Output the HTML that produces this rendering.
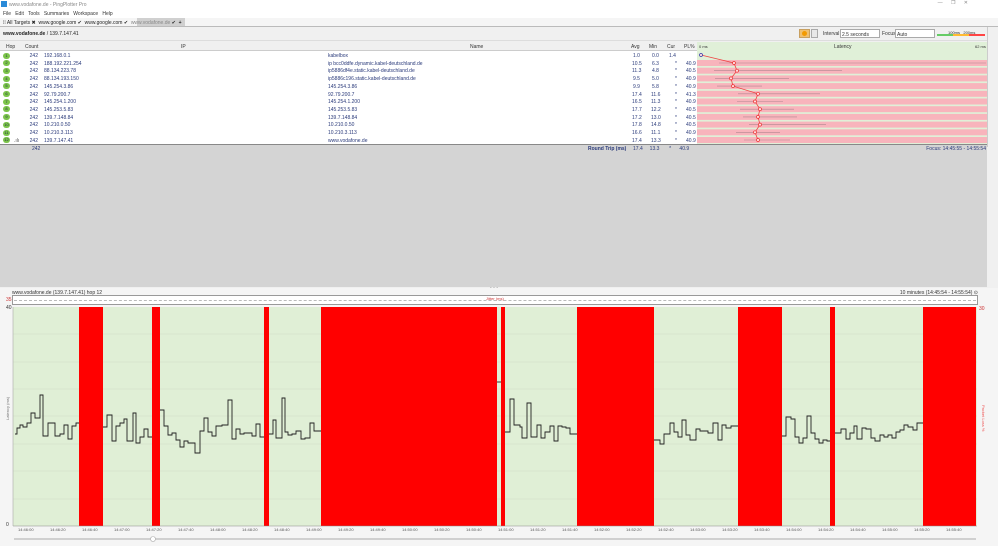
<!DOCTYPE html>
<html><head><meta charset="utf-8"><style>
*{margin:0;padding:0;box-sizing:border-box}
body{width:998px;height:546px;overflow:hidden;background:#f0f0f0;font-family:"Liberation Sans",sans-serif;font-size:5px;color:#333;position:relative}
.a{position:absolute;white-space:nowrap}
.row{position:absolute;left:0;width:697px;height:7.7px;font-size:5px;color:#2a3a7a}
.row span{position:absolute;top:1px}
.hop{position:absolute;left:3px;top:0.5px;width:7px;height:6px;border-radius:3px;background:#7cc44a;color:#234;font-size:4px;text-align:center;line-height:6px}
.num{text-align:right;width:16px}
</style></head><body>
<div class="a" style="left:0;top:0;width:998px;height:9px;background:#fff"></div>
<div class="a" style="left:1px;top:1px;width:6px;height:6px;background:#2a8ad8"></div>
<div class="a" style="left:9px;top:1.5px;color:#888">www.vodafone.de - PingPlotter Pro</div>
<div class="a" style="right:30px;top:0;color:#888">—&nbsp;&nbsp;&nbsp;&nbsp;&nbsp;&nbsp;❐&nbsp;&nbsp;&nbsp;&nbsp;&nbsp;&nbsp;✕</div>
<div class="a" style="left:0;top:9px;width:998px;height:9px;background:#fff"></div>
<div class="a" style="left:3px;top:11px;color:#333">File&nbsp;&nbsp;&nbsp;Edit&nbsp;&nbsp;&nbsp;Tools&nbsp;&nbsp;&nbsp;Summaries&nbsp;&nbsp;&nbsp;Workspace&nbsp;&nbsp;&nbsp;Help</div>
<div class="a" style="left:0;top:18px;width:998px;height:9px;background:#f5f5f5"></div>
<div class="a" style="left:137px;top:18px;width:48px;height:8px;background:#d0d0d0"></div>
<div class="a" style="left:3px;top:19.5px;color:#222">⁞⁞ All Targets ✖ &nbsp;www.google.com ✔ &nbsp;www.google.com ✔ &nbsp;<span style="color:#888">www.vodafone.de</span> ✔ &nbsp;<b>+</b></div>
<div class="a" style="left:0;top:26px;width:998px;height:1px;background:#bbb"></div>
<div class="a" style="left:0;top:28px;width:987px;height:13px;background:#f0f0f0;border-bottom:1px solid #ddd"></div>
<div class="a" style="left:3px;top:31px;color:#222"><b>www.vodafone.de</b> / 139.7.147.41</div>
<div class="a" style="left:799px;top:29px;width:11px;height:9px;background:#f0c070;border:1px solid #c8a060"></div>
<div class="a" style="left:802px;top:31px;width:5px;height:5px;border-radius:3px;background:#f39a00"></div>
<div class="a" style="left:811px;top:29px;width:7px;height:9px;background:#e8e8e8;border:1px solid #aaa"></div>
<div class="a" style="left:823px;top:31px">Interval</div>
<div class="a" style="left:840px;top:29px;width:40px;height:9px;background:#fff;border:1px solid #aaa;padding:2px 1px">2.5 seconds</div>
<div class="a" style="left:882px;top:31px">Focus</div>
<div class="a" style="left:895px;top:29px;width:40px;height:9px;background:#fff;border:1px solid #aaa;padding:2px 1px">Auto</div>
<div class="a" style="left:937px;top:34px;width:16px;height:2px;background:#6c6"></div>
<div class="a" style="left:953px;top:34px;width:16px;height:2px;background:#fb3"></div>
<div class="a" style="left:969px;top:34px;width:16px;height:2px;background:#f44"></div>
<div class="a" style="left:948px;top:30px;font-size:4px">100ms&nbsp;&nbsp;&nbsp;200ms</div>
<div class="a" style="left:987px;top:27px;width:11px;height:120px;background:#f0f0f0;border-left:1px solid #ccc"></div>
<div class="a" style="left:0;top:42px;width:987px;height:9px;background:#f0f0f0;border-bottom:1px solid #ccc"></div>
<div class="a" style="left:6px;top:44px">Hop</div>
<div class="a" style="left:25px;top:44px">Count</div>
<div class="a" style="left:181px;top:44px">IP</div>
<div class="a" style="left:470px;top:44px">Name</div>
<div class="a" style="left:631px;top:44px">Avg</div>
<div class="a" style="left:649px;top:44px">Min</div>
<div class="a" style="left:667px;top:44px">Cur</div>
<div class="a" style="left:684px;top:44px">PL%</div>
<div class="a" style="left:697px;top:42px;width:290px;height:9px;background:#e0f0d8"></div>
<div class="a" style="left:699px;top:44px;font-size:4px">0 ms</div>
<div class="a" style="left:834px;top:44px">Latency</div>
<div class="a" style="left:975px;top:44px;font-size:4px">62 ms</div>
<div class="a" style="left:0;top:51px;width:697px;height:93px;background:#fff"></div>
<div class="a" style="left:697px;top:51px;width:290px;height:93px;background:#e0f0d8"></div>
<svg class="a" style="left:0;top:0" width="998" height="546">
<g fill="#f8b4bc">
<rect x="697" y="60" width="290" height="6"/><rect x="697" y="67.7" width="290" height="6"/><rect x="697" y="75.4" width="290" height="6"/><rect x="697" y="83.1" width="290" height="6"/><rect x="697" y="90.8" width="290" height="6"/><rect x="697" y="98.5" width="290" height="6"/><rect x="697" y="106.2" width="290" height="6"/><rect x="697" y="113.9" width="290" height="6"/><rect x="697" y="121.6" width="290" height="6"/><rect x="697" y="129.3" width="290" height="6"/><rect x="697" y="137" width="290" height="6"/>
</g>
<g stroke="#b08890" stroke-width="0.6">
<line x1="719" y1="63" x2="986" y2="63"/><line x1="714" y1="70.7" x2="842" y2="70.7"/><line x1="715" y1="78.4" x2="789" y2="78.4"/><line x1="717" y1="86.1" x2="762" y2="86.1"/><line x1="738" y1="93.8" x2="820" y2="93.8"/><line x1="737" y1="101.5" x2="783" y2="101.5"/><line x1="740" y1="109.2" x2="794" y2="109.2"/><line x1="743" y1="116.9" x2="797" y2="116.9"/><line x1="749" y1="124.6" x2="826" y2="124.6"/><line x1="736" y1="132.3" x2="780" y2="132.3"/><line x1="744" y1="140" x2="790" y2="140"/>
</g>
<polyline fill="none" stroke="#e44" stroke-width="0.8" points="701,55 734,63 737,70.7 731,78.4 733,86.1 758,93.8 755,101.5 760,109.2 758,116.9 760,124.6 755,132.3 758,140"/>
<g fill="#fdd" stroke="#e33" stroke-width="0.7"><circle cx="734" cy="63" r="1.5"/><circle cx="737" cy="70.7" r="1.5"/><circle cx="731" cy="78.4" r="1.5"/><circle cx="733" cy="86.1" r="1.5"/><circle cx="758" cy="93.8" r="1.5"/><circle cx="755" cy="101.5" r="1.5"/><circle cx="760" cy="109.2" r="1.5"/><circle cx="758" cy="116.9" r="1.5"/><circle cx="760" cy="124.6" r="1.5"/><circle cx="755" cy="132.3" r="1.5"/><circle cx="758" cy="140" r="1.5"/><circle cx="701" cy="55" r="1.5" stroke="#33a"/></g>
</svg>
<div class="a" style="left:0;top:144px;width:987px;height:1px;background:#888"></div>
<div class="a" style="left:0;top:145px;width:987px;height:142px;background:#d4d4d4"></div>
<div class="a" style="left:32px;top:146px;color:#2a3a7a">242</div>
<div class="a" style="left:588px;top:146px;color:#2a3a7a"><b>Round Trip (ms)</b></div>
<div class="a" style="left:633px;top:146px;color:#2a3a7a">17.4&nbsp;&nbsp;&nbsp;&nbsp;&nbsp;13.3&nbsp;&nbsp;&nbsp;&nbsp;&nbsp;&nbsp;&nbsp;*&nbsp;&nbsp;&nbsp;&nbsp;&nbsp;&nbsp;40.9</div>
<div class="a" style="right:12px;top:146px;color:#2a3a7a">Focus: 14:45:55 - 14:55:54</div>
<div class="a" style="left:490px;top:286px;color:#555">• • •</div>
<div class="a" style="left:0;top:288px;width:998px;height:258px;background:#f5f5f5"></div>
<div class="a" style="left:12px;top:290px;color:#333">www.vodafone.de (139.7.147.41) hop 12</div>
<div class="a" style="right:20px;top:290px;color:#333">10 minutes (14:45:54 - 14:55:54) ⊙</div>
<div class="a" style="left:12px;top:295px;width:966px;height:10px;background:#fff;border:1px solid #999"></div>
<div class="a" style="left:6px;top:297px;color:#c33">35</div>
<div class="a" style="left:486px;top:296px;font-size:4px;color:#c33">Jitter (ms)</div>
<div class="a" style="left:14px;top:300px;width:962px;border-top:1px dashed #bbb"></div>
<div class="a" style="left:6px;top:305px;color:#333">40</div>
<div class="a" style="left:6px;top:522px;color:#333">0</div>
<div class="a" style="left:979px;top:306px;color:#c33">30</div>
<svg class="a" style="left:0;top:0" width="998" height="546">
<rect x="13" y="307" width="964" height="219" fill="#e0efd6"/>
<g stroke="#cfdcc5" stroke-width="0.6"><line x1="13" y1="334" x2="977" y2="334"/><line x1="13" y1="362" x2="977" y2="362"/><line x1="13" y1="389" x2="977" y2="389"/><line x1="13" y1="416" x2="977" y2="416"/><line x1="13" y1="444" x2="977" y2="444"/><line x1="13" y1="471" x2="977" y2="471"/><line x1="13" y1="499" x2="977" y2="499"/></g>
<g fill="#ff0000"><rect x="79" y="307" width="24" height="219"/><rect x="152" y="307" width="8" height="219"/><rect x="264" y="307" width="5" height="219"/><rect x="321" y="307" width="176" height="219"/><rect x="501" y="307" width="4" height="219"/><rect x="577" y="307" width="77" height="219"/><rect x="738" y="307" width="44" height="219"/><rect x="830" y="307" width="5" height="219"/><rect x="923" y="307" width="53" height="219"/></g>
<g fill="none" stroke="#222" stroke-width="0.9">
<path d="M15,434H17V428H20V425H23V427H27V423H31V413H35V418H40V395H43V436H48V423H55V436H60V434H64V425H68V439H72V426H76V423H79"/>
<path d="M103,427H107V415H112V441H116V426H120V423H124V419H127V441H133V413H136V443H140V437H144V429H148V437H152"/>
<path d="M160,410H164V426H168V435H172V433H176V440H180V447H184V441H188V443H195V453H200V431H204V418H208V432H212V436H216V426H222V425H228V400H232V439H236V429H240V434H244V433H252V436H256V424H260V437H264"/>
<path d="M269,434H273V420H276V438H282V398H285V432H288V435H292V434H296V431H301V439H305V438H310V423H314V431H321"/>
<path d="M497,382H501"/>
<path d="M505,432H510V399H514V425H520V427H522V438H527V403H531V437H537V425H541V438H545V432H550V426H554V441H558V426H562V427H566V428H570V434H577"/>
<path d="M654,440H660V444H664V434H670V423H674V432H678V437H682V420H686V435H690V440H696V429H700V431H708V433H713V423H718V440H722V425H726V428H731V426H738"/>
<path d="M782,436H786V417H791V419H795V437H799V443H803V438H807V416H811V433H815V439H819V443H823V440H827V441H830"/>
<path d="M835,433H841V429H846V439H850V433H854V426H857V439H862V428H866V429H871V438H875V441H880V435H884V437H888V435H892V438H896V432H900V430H904V425H908V427H913V430H917V423H923"/>
</g>
<line x1="13" y1="526" x2="977" y2="526" stroke="#888" stroke-width="0.6"/>
<line x1="13" y1="307" x2="13" y2="526" stroke="#aaa" stroke-width="0.6"/>
<line x1="14" y1="539" x2="976" y2="539" stroke="#bbb" stroke-width="1.2"/>
<circle cx="153" cy="539" r="2.5" fill="#fff" stroke="#aaa" stroke-width="0.6"/>
<text x="9" y="420" font-size="4" fill="#777" transform="rotate(-90 9 420)" font-family="Liberation Sans">Latency (ms)</text>
<text x="982" y="405" font-size="4" fill="#e55" transform="rotate(90 982 405)" font-family="Liberation Sans">Packet Loss %</text>
<g font-size="4" fill="#555" font-family="Liberation Sans">
<text x="18" y="531">14:46:00</text><text x="50" y="531">14:46:20</text><text x="82" y="531">14:46:40</text><text x="114" y="531">14:47:00</text><text x="146" y="531">14:47:20</text><text x="178" y="531">14:47:40</text><text x="210" y="531">14:48:00</text><text x="242" y="531">14:48:20</text><text x="274" y="531">14:48:40</text><text x="306" y="531">14:49:00</text><text x="338" y="531">14:49:20</text><text x="370" y="531">14:49:40</text><text x="402" y="531">14:50:00</text><text x="434" y="531">14:50:20</text><text x="466" y="531">14:50:40</text><text x="498" y="531">14:51:00</text><text x="530" y="531">14:51:20</text><text x="562" y="531">14:51:40</text><text x="594" y="531">14:52:00</text><text x="626" y="531">14:52:20</text><text x="658" y="531">14:52:40</text><text x="690" y="531">14:53:00</text><text x="722" y="531">14:53:20</text><text x="754" y="531">14:53:40</text><text x="786" y="531">14:54:00</text><text x="818" y="531">14:54:20</text><text x="850" y="531">14:54:40</text><text x="882" y="531">14:55:00</text><text x="914" y="531">14:55:20</text><text x="946" y="531">14:55:40</text>
</g>
</svg>
<div class="row" style="top:52px"><div class="hop">1</div><span class="num" style="left:22px">242</span><span style="left:44px">192.168.0.1</span><span style="left:328px">kabelbox</span><span style="left:633px">1.0</span><span style="left:652px">0.0</span><span style="left:669px">1.4</span></div>
<div class="row" style="top:59.7px"><div class="hop">2</div><span class="num" style="left:22px">242</span><span style="left:44px">188.192.221.254</span><span style="left:328px">ip bcc0ddfe.dynamic.kabel-deutschland.de</span><span style="left:632px">10.5</span><span style="left:652px">6.3</span><span style="left:675px">*</span><span style="left:686px">40.9</span></div>
<div class="row" style="top:67.4px"><div class="hop">3</div><span class="num" style="left:22px">242</span><span style="left:44px">88.134.223.78</span><span style="left:328px">ip5886df4e.static.kabel-deutschland.de</span><span style="left:632px">11.3</span><span style="left:652px">4.8</span><span style="left:675px">*</span><span style="left:686px">40.5</span></div>
<div class="row" style="top:75.1px"><div class="hop">4</div><span class="num" style="left:22px">242</span><span style="left:44px">88.134.193.150</span><span style="left:328px">ip5886c196.static.kabel-deutschland.de</span><span style="left:633px">9.5</span><span style="left:652px">5.0</span><span style="left:675px">*</span><span style="left:686px">40.9</span></div>
<div class="row" style="top:82.8px"><div class="hop">5</div><span class="num" style="left:22px">242</span><span style="left:44px">145.254.3.86</span><span style="left:328px">145.254.3.86</span><span style="left:633px">9.9</span><span style="left:652px">5.8</span><span style="left:675px">*</span><span style="left:686px">40.9</span></div>
<div class="row" style="top:90.5px"><div class="hop">6</div><span class="num" style="left:22px">242</span><span style="left:44px">92.79.200.7</span><span style="left:328px">92.79.200.7</span><span style="left:632px">17.4</span><span style="left:651px">11.6</span><span style="left:675px">*</span><span style="left:686px">41.3</span></div>
<div class="row" style="top:98.2px"><div class="hop">7</div><span class="num" style="left:22px">242</span><span style="left:44px">145.254.1.200</span><span style="left:328px">145.254.1.200</span><span style="left:632px">16.5</span><span style="left:651px">11.3</span><span style="left:675px">*</span><span style="left:686px">40.9</span></div>
<div class="row" style="top:105.9px"><div class="hop">8</div><span class="num" style="left:22px">242</span><span style="left:44px">145.253.5.83</span><span style="left:328px">145.253.5.83</span><span style="left:632px">17.7</span><span style="left:651px">12.2</span><span style="left:675px">*</span><span style="left:686px">40.5</span></div>
<div class="row" style="top:113.6px"><div class="hop">9</div><span class="num" style="left:22px">242</span><span style="left:44px">139.7.148.84</span><span style="left:328px">139.7.148.84</span><span style="left:632px">17.2</span><span style="left:651px">13.0</span><span style="left:675px">*</span><span style="left:686px">40.5</span></div>
<div class="row" style="top:121.3px"><div class="hop">10</div><span class="num" style="left:22px">242</span><span style="left:44px">10.210.0.50</span><span style="left:328px">10.210.0.50</span><span style="left:632px">17.8</span><span style="left:651px">14.8</span><span style="left:675px">*</span><span style="left:686px">40.5</span></div>
<div class="row" style="top:129px"><div class="hop">11</div><span class="num" style="left:22px">242</span><span style="left:44px">10.210.3.113</span><span style="left:328px">10.210.3.113</span><span style="left:632px">16.6</span><span style="left:651px">11.1</span><span style="left:675px">*</span><span style="left:686px">40.9</span></div>
<div class="row" style="top:136.7px"><div class="hop">12</div><span style="left:14px;color:#555">.ılı</span><span class="num" style="left:22px">242</span><span style="left:44px">139.7.147.41</span><span style="left:328px">www.vodafone.de</span><span style="left:632px">17.4</span><span style="left:651px">13.3</span><span style="left:675px">*</span><span style="left:686px">40.9</span></div>
</body></html>
